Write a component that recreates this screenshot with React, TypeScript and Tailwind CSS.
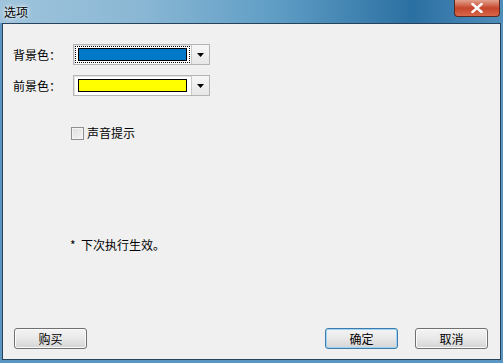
import React from "react";

const cjk = { fontFamily: '"SimSun", "Noto Sans CJK SC", sans-serif' };

function ColorCombo({ color, focused }: { color: string; focused?: boolean }) {
    return (
        <div className="flex h-[21px] w-[137px] border border-[#b4b4b4] bg-white shadow-[inset_1px_1px_0_#e3e3e3]">
            <div className="flex flex-1 items-center px-[1px]">
                <div className={`flex h-[17px] w-full items-center px-[2px] ${focused ? "border border-dotted border-black" : "border border-transparent"}`}>
                    <div className="h-[13px] w-full border border-black" style={{ backgroundColor: color }} />
                </div>
            </div>
            <div className="flex w-[18px] items-center justify-center border-l border-[#c9c9c9] bg-gradient-to-b from-[#f7f7f7] to-[#e7e7e7]">
                <svg width="7" height="4" viewBox="0 0 7 4">
                    <path d="M0 0 H7 L3.5 4 Z" fill="#000" />
                </svg>
            </div>
        </div>
    );
}

function Btn({ label, primary }: { label: string; primary?: boolean }) {
    return (
        <div
            className={`flex h-[21px] w-[73px] items-center justify-center rounded-[3px] border text-[12px] text-black bg-gradient-to-b from-[#f4f4f4] via-[#e8e8e8] to-[#d4d4d4] ${primary ? "border-[#3d7bad] shadow-[inset_0_0_0_1px_#9ed4f4]" : "border-[#707070] shadow-[inset_0_0_0_1px_#fafafa]"}`}
            style={cjk}
        >
            {label}
        </div>
    );
}

export default function App() {
    return (
        <div className="flex h-[363px] w-[503px] flex-col bg-[#5b95c2] px-[2px] pb-[3px]">
            {/* Title bar */}
            <div className="relative flex h-[23px] items-center bg-[linear-gradient(90deg,#9fc4dc_0%,#8ab7d4_28%,#5f9dc5_55%,#2b70a2_82%,#4f8dbb_100%)] -mx-[2px]">
                <span className="pl-[4px] text-[12px] text-black [text-shadow:0_0_6px_#fff,0_0_3px_#fff]" style={{ fontFamily: '"Microsoft YaHei", "Noto Sans CJK SC", sans-serif' }}>
                    选项
                </span>
                <div className="absolute right-[3px] top-0 flex h-[17px] w-[46px] items-center justify-center rounded-b-[4px] border border-t-0 border-[#5a2a22] bg-gradient-to-b from-[#e2a08d] via-[#c5452b] to-[#d8664a]">
                    <svg width="12" height="10" viewBox="0 0 12 10">
                        <path d="M1.5 1 L10.5 9 M10.5 1 L1.5 9" stroke="#fff" strokeWidth="2.4" strokeLinecap="square" />
                    </svg>
                </div>
            </div>

            {/* Client area */}
            <div className="flex flex-1 flex-col border border-[#27425b] bg-[#f0f0f0] text-[12px] text-black" style={cjk}>
                <div className="mt-[20px] flex items-center">
                    <span className="ml-[10px] w-[60px]">背景色：</span>
                    <ColorCombo color="#0078c8" focused />
                </div>
                <div className="mt-[10px] flex items-center">
                    <span className="ml-[10px] w-[60px]">前景色：</span>
                    <ColorCombo color="#ffff00" />
                </div>

                <div className="ml-[68px] mt-[28px] flex items-center gap-[3px]">
                    <div className="h-[13px] w-[13px] border border-[#8e8f8f] bg-gradient-to-br from-[#dcdcdc] to-[#f6f6f6] shadow-[inset_0_0_0_1px_#f4f4f4]" />
                    <span>声音提示</span>
                </div>

                <div className="ml-[67px] mt-[94px]">*&nbsp; 下次执行生效。</div>

                <div className="mt-auto mb-[10px] flex items-center">
                    <div className="ml-[11px]">
                        <Btn label="购买" />
                    </div>
                    <div className="ml-auto">
                        <Btn label="确定" primary />
                    </div>
                    <div className="ml-[17px] mr-[12px]">
                        <Btn label="取消" />
                    </div>
                </div>
            </div>
        </div>
    );
}
